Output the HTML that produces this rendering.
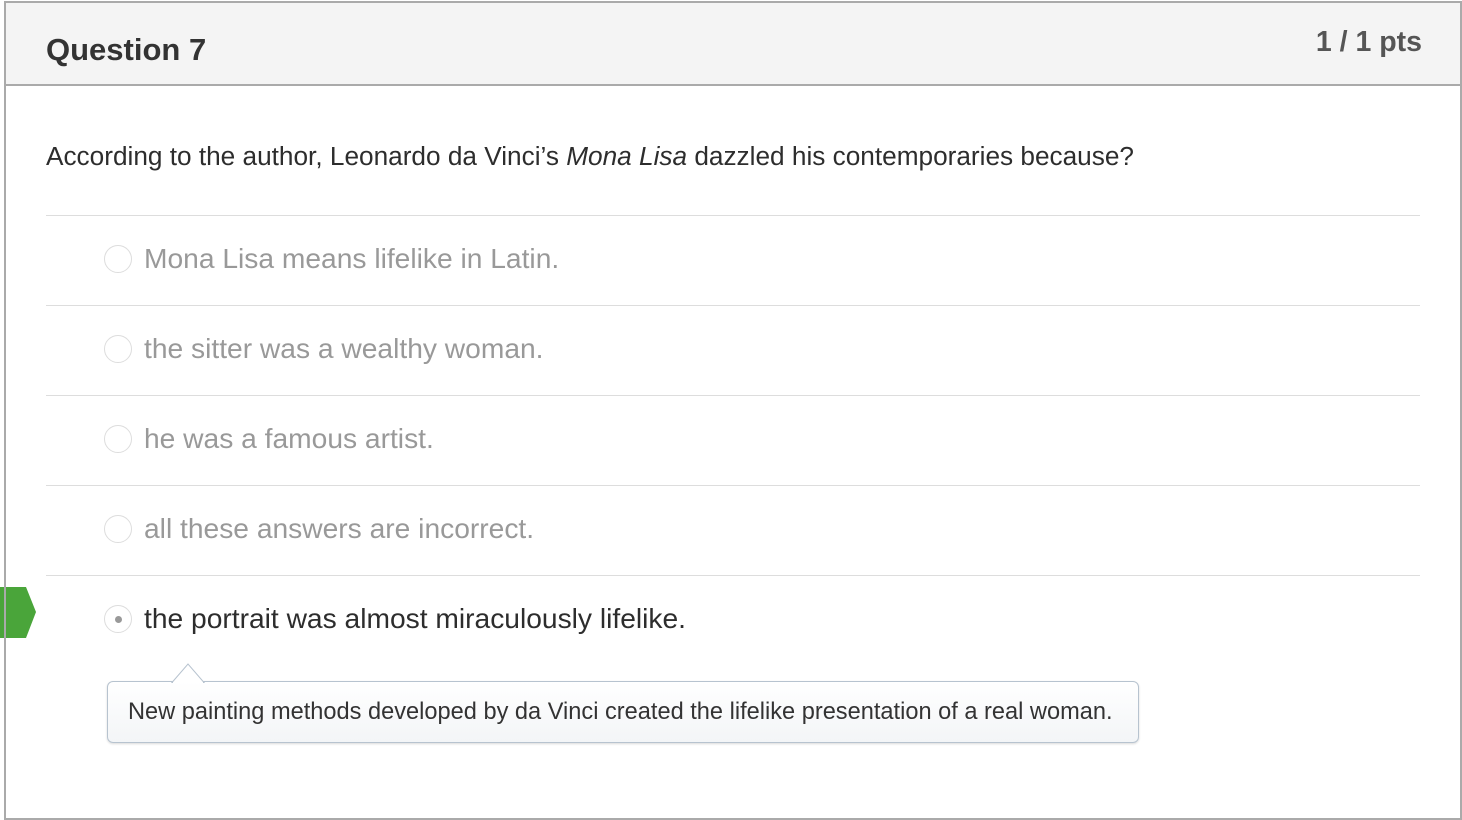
<!DOCTYPE html>
<html><head><meta charset="utf-8"><style>
html,body{margin:0;padding:0;background:#fff;width:1462px;height:820px;overflow:hidden;font-family:"Liberation Sans",Arial,sans-serif;}
.box{position:absolute;left:4px;top:1px;width:1454px;height:815px;border:2px solid #aaa;}
.hdr{position:absolute;left:0;top:0;width:1454px;height:81px;background:#f4f4f4;border-bottom:2px solid #aaa;}
.q{position:absolute;left:40px;top:29px;font-size:31px;font-weight:bold;color:#333;}
.pts{position:absolute;right:38px;top:23px;font-size:28.5px;font-weight:bold;color:#555;}
.text{position:absolute;left:40px;top:138px;font-size:26.2px;color:#2d2d2d;}
.line{position:absolute;left:40px;width:1374px;height:1px;background:#ddd;}
.ans{position:absolute;left:138px;font-size:28.2px;color:#999;}
.rad{position:absolute;left:98px;width:28px;height:28px;border:1px solid #ddd;border-radius:50%;background:#fff;box-sizing:border-box;}
.tip{position:absolute;left:101px;top:678px;width:1032px;height:62px;border:1px solid #b7c3cf;border-radius:6px;background:linear-gradient(#fff,#f3f5f7);box-shadow:0 1px 2px rgba(0,0,0,.15);box-sizing:border-box;font-size:23.6px;color:#333;padding:17px 0 0 20px;white-space:nowrap;}
</style></head><body>
<svg style="position:absolute;left:0;top:586px" width="38" height="54"><polygon points="0,1 26,1 36,26 26,52 0,52" fill="#4aa53a"/></svg>
<div class="box">
<div class="hdr"><div class="q">Question 7</div><div class="pts">1 / 1 pts</div></div>
<div class="text">According to the author, Leonardo da Vinci’s <i>Mona Lisa</i> dazzled his contemporaries because?</div>
<div class="line" style="top:212px"></div>
<div class="rad" style="top:242px"></div><div class="ans" style="top:239px">Mona Lisa means lifelike in Latin.</div>
<div class="line" style="top:302px"></div>
<div class="rad" style="top:332px"></div><div class="ans" style="top:329px">the sitter was a wealthy woman.</div>
<div class="line" style="top:392px"></div>
<div class="rad" style="top:422px"></div><div class="ans" style="top:419px">he was a famous artist.</div>
<div class="line" style="top:482px"></div>
<div class="rad" style="top:512px"></div><div class="ans" style="top:509px">all these answers are incorrect.</div>
<div class="line" style="top:572px"></div>
<div class="rad" style="top:602px"><div style="position:absolute;left:9.5px;top:9.5px;width:7px;height:7px;border-radius:50%;background:#999"></div></div>
<div class="ans" style="top:599px;color:#2d2d2d">the portrait was almost miraculously lifelike.</div>
<div class="tip">New painting methods developed by da Vinci created the lifelike presentation of a real woman.</div>
<svg style="position:absolute;left:164px;top:659px" width="40" height="21"><polygon points="2,20.5 18,2 34,20.5" fill="#fff" stroke="#b7c3cf"/><rect x="3" y="20" width="30" height="2" fill="#fff"/></svg>
</div>
</body></html>
